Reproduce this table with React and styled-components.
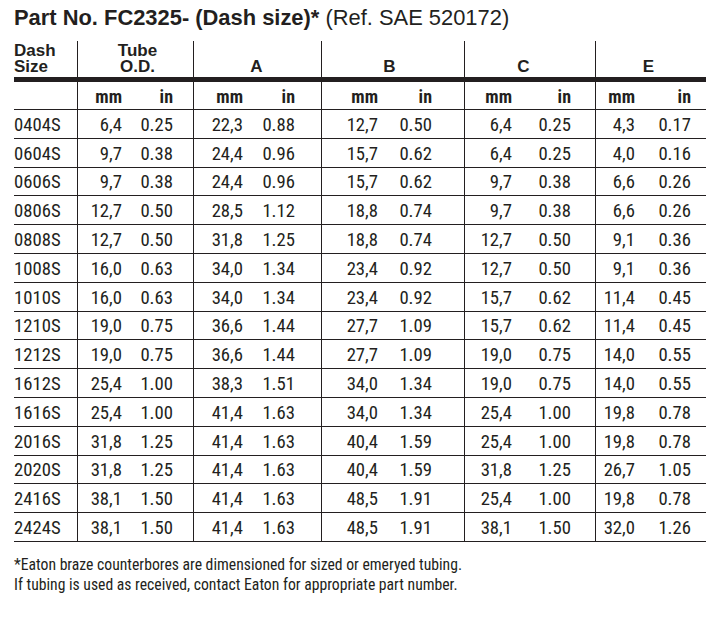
import React from "react";
import styled, { createGlobalStyle } from "styled-components";

const INK = "#231f20";
// Roboto is a variable font here, so font-stretch gives a real condensed cut
const NARROW = `Roboto, "DejaVu Sans Condensed", sans-serif`;

const GlobalStyle = createGlobalStyle`
  html, body {
    margin: 0;
    padding: 0;
    background: #fff;
  }
  body {
    font-family: "Liberation Sans", Arial, sans-serif;
    color: ${INK};
  }
`;

// column widths (px) and right padding so numbers line up with the units
const COLS = [63, 58, 58, 64, 64, 71.5, 71.5, 65.5, 65.5, 55.5, 55.5];
const PADS = [0, 13, 20, 14, 26, 14.5, 32, 17.5, 24, 15.5, 15];
const GRID = COLS.map((c) => `${c}px`).join(" ");

const GROUPS = [
  { label: ["Dash", "Size"], width: 63, shift: 0, first: true },
  { label: ["Tube", "O.D."], width: 116, shift: 4 },
  { label: ["A"], width: 128, shift: -2 },
  { label: ["B"], width: 143, shift: -7 },
  { label: ["C"], width: 131, shift: -13 },
  { label: ["E"], width: 111, shift: -5 },
];

const ROWS = [
  ["0404S", "6,4", "0.25", "22,3", "0.88", "12,7", "0.50", "6,4", "0.25", "4,3", "0.17"],
  ["0604S", "9,7", "0.38", "24,4", "0.96", "15,7", "0.62", "6,4", "0.25", "4,0", "0.16"],
  ["0606S", "9,7", "0.38", "24,4", "0.96", "15,7", "0.62", "9,7", "0.38", "6,6", "0.26"],
  ["0806S", "12,7", "0.50", "28,5", "1.12", "18,8", "0.74", "9,7", "0.38", "6,6", "0.26"],
  ["0808S", "12,7", "0.50", "31,8", "1.25", "18,8", "0.74", "12,7", "0.50", "9,1", "0.36"],
  ["1008S", "16,0", "0.63", "34,0", "1.34", "23,4", "0.92", "12,7", "0.50", "9,1", "0.36"],
  ["1010S", "16,0", "0.63", "34,0", "1.34", "23,4", "0.92", "15,7", "0.62", "11,4", "0.45"],
  ["1210S", "19,0", "0.75", "36,6", "1.44", "27,7", "1.09", "15,7", "0.62", "11,4", "0.45"],
  ["1212S", "19,0", "0.75", "36,6", "1.44", "27,7", "1.09", "19,0", "0.75", "14,0", "0.55"],
  ["1612S", "25,4", "1.00", "38,3", "1.51", "34,0", "1.34", "19,0", "0.75", "14,0", "0.55"],
  ["1616S", "25,4", "1.00", "41,4", "1.63", "34,0", "1.34", "25,4", "1.00", "19,8", "0.78"],
  ["2016S", "31,8", "1.25", "41,4", "1.63", "40,4", "1.59", "25,4", "1.00", "19,8", "0.78"],
  ["2020S", "31,8", "1.25", "41,4", "1.63", "40,4", "1.59", "31,8", "1.25", "26,7", "1.05"],
  ["2416S", "38,1", "1.50", "41,4", "1.63", "48,5", "1.91", "25,4", "1.00", "19,8", "0.78"],
  ["2424S", "38,1", "1.50", "41,4", "1.63", "48,5", "1.91", "38,1", "1.50", "32,0", "1.26"],
];

const UNITS = ["", "mm", "in", "mm", "in", "mm", "in", "mm", "in", "mm", "in"];

const App = () => {
  return (
    <>
      <GlobalStyle />
      <Page>
        <Title>
          Part No. FC2325- (Dash size)* <Ref>(Ref. SAE 520172)</Ref>
        </Title>

        <Table>
          <HeadRow>
            {GROUPS.map((g, i) => (
              <GroupHead key={i} $width={g.width} $shift={g.shift} $first={g.first}>
                {g.label.map((line, j) => (
                  <HeadLine key={j}>{line}</HeadLine>
                ))}
              </GroupHead>
            ))}
          </HeadRow>
          <Rule />
          <UnitRow>
            {UNITS.map((u, i) => (
              <Cell key={i} $pad={PADS[i]} $edge={i % 2 === 1}>
                {u}
              </Cell>
            ))}
          </UnitRow>
          {ROWS.map((row, r) => (
            <DataRow key={r}>
              {row.map((v, i) => (
                <Cell key={i} $pad={PADS[i]} $edge={i % 2 === 1} $left={i === 0}>
                  {v}
                </Cell>
              ))}
            </DataRow>
          ))}
        </Table>

        <Note>
          <div>*Eaton braze counterbores are dimensioned for sized or emeryed tubing.</div>
          <div>If tubing is used as received, contact Eaton for appropriate part number.</div>
        </Note>
      </Page>
    </>
  );
};

const Page = styled.div`
  padding: 7px 0 0 14px;
  width: 692px;
`;

const Title = styled.h1`
  margin: 0;
  font-size: 21.9px;
  line-height: 21.5px;
  font-weight: bold;
  white-space: nowrap;
`;

const Ref = styled.span`
  font-weight: normal;
`;

const Table = styled.div`
  margin-top: 12.5px;
  width: 692px;
`;

const HeadRow = styled.div`
  display: flex;
  height: 36px;
`;

const GroupHead = styled.div`
  box-sizing: border-box;
  width: ${(p) => p.$width}px;
  display: flex;
  flex-direction: column;
  justify-content: flex-end;
  align-items: ${(p) => (p.$first ? "flex-start" : "center")};
  padding-bottom: 3px;
  padding-left: ${(p) => Math.max(p.$shift, 0)}px;
  padding-right: ${(p) => Math.max(-p.$shift, 0)}px;
  border-left: ${(p) => (p.$first ? "none" : `1px solid ${INK}`)};
  font-size: 17px;
  font-weight: bold;
`;

const HeadLine = styled.div`
  height: 15.3px;
  line-height: 15.3px;
`;

const Rule = styled.div`
  height: 5px;
  background: ${INK};
`;

const Row = styled.div`
  display: grid;
  grid-template-columns: ${GRID};
  box-sizing: border-box;
  border-bottom: 1px solid ${INK};
  font-family: ${NARROW};
  font-stretch: 75%;
`;

const UnitRow = styled(Row)`
  height: 28px;
  font-weight: bold;
  font-size: 18px;
`;

const DataRow = styled(Row)`
  height: 28.8px;
  font-size: 18.7px;
  font-weight: 450;
`;

const Cell = styled.div`
  box-sizing: border-box;
  display: flex;
  align-items: center;
  justify-content: ${(p) => (p.$left ? "flex-start" : "flex-end")};
  padding-top: 2px;
  padding-right: ${(p) => p.$pad}px;
  border-left: ${(p) => (p.$edge ? `1px solid ${INK}` : "none")};
  white-space: nowrap;
`;

const Note = styled.div`
  margin-top: 13px;
  font-family: ${NARROW};
  font-stretch: 75%;
  font-size: 15.7px;
  line-height: 20px;
`;

export default App;
